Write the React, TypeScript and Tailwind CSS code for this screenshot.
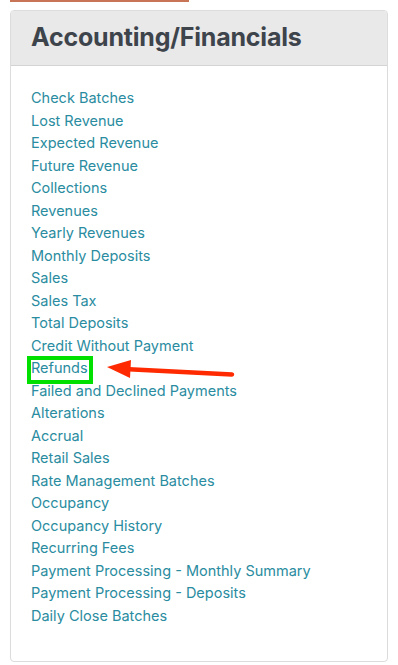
const links = [
  'Check Batches',
  'Lost Revenue',
  'Expected Revenue',
  'Future Revenue',
  'Collections',
  'Revenues',
  'Yearly Revenues',
  'Monthly Deposits',
  'Sales',
  'Sales Tax',
  'Total Deposits',
  'Credit Without Payment',
  'Refunds',
  'Failed and Declined Payments',
  'Alterations',
  'Accrual',
  'Retail Sales',
  'Rate Management Batches',
  'Occupancy',
  'Occupancy History',
  'Recurring Fees',
  'Payment Processing - Monthly Summary',
  'Payment Processing - Deposits',
  'Daily Close Batches',
];

function Arrow() {
  return (
    <svg
      className="absolute left-[104px] top-[356px]"
      width="132"
      height="26"
      viewBox="0 0 132 26"
    >
      <line x1="20" y1="13" x2="128" y2="18.5" stroke="#ff2a00" strokeWidth="4.5" strokeLinecap="round" />
      <polygon points="3,11 27,4 26,22" fill="#ff2a00" />
    </svg>
  );
}

export default function App() {
  return (
    <div className="relative w-[398px] h-[665px] bg-white overflow-hidden font-['Inter',sans-serif]">
      <div className="ml-[10px] w-[179px] h-[2px] bg-[#c87456]" />
      <div className="mx-[10px] mt-[8px] h-[652px] rounded-[4px] border border-[#dcdcdc] overflow-hidden">
        <div className="h-[55px] bg-[#e9e9e9] border-b border-[#d4d4d4] pl-[20px] flex items-center">
          <h2 className="text-[25px] font-bold text-[#3e444b] tracking-[-0.2px]">
            Accounting/Financials
          </h2>
        </div>
        <ul className="pl-[20px] pt-[21px]">
          {links.map((l) => (
            <li key={l} className="h-[22.5px] leading-[22.5px] text-[14.5px] text-[#2a8ca0]">
              {l === 'Refunds' ? (
                <span className="relative inline-block">
                  {l}
                  <span className="absolute left-[-4px] right-[-5px] top-[-1px] bottom-[-4px] border-4 border-[#00e000]" />
                </span>
              ) : (
                l
              )}
            </li>
          ))}
        </ul>
      </div>
      <Arrow />
    </div>
  );
}
